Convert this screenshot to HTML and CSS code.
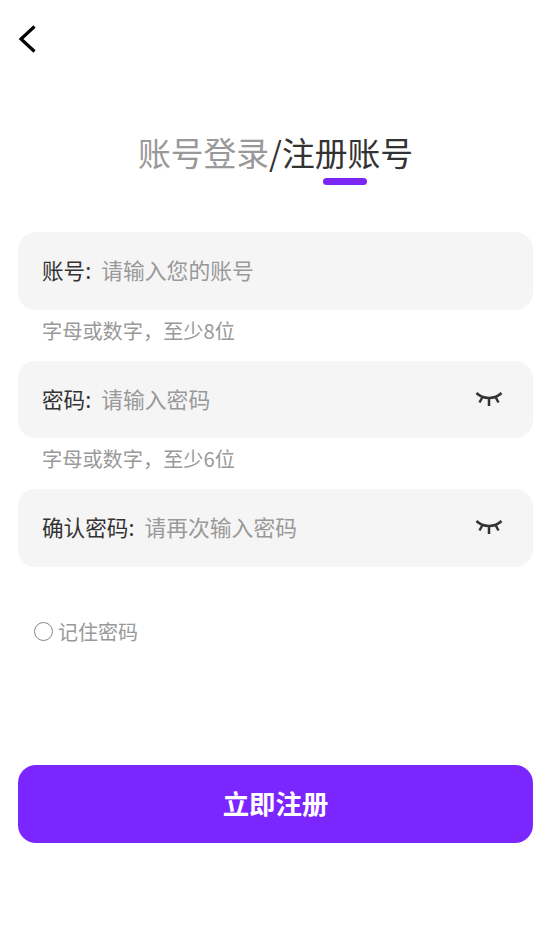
FILE: index.html
```html
<!DOCTYPE html>
<html lang="zh-CN">
<head>
    <meta charset="UTF-8">
    <meta name="viewport" content="width=device-width, initial-scale=1.0">
    <title>注册账号</title>
    <link rel="stylesheet" href="styles.css">
</head>
<body>
    <div class="container">
        <div class="nav-bar">
            <svg class="back-icon" width="20" height="30" viewBox="0 0 20 30">
                <path d="M16.5 2.5 L3 15 L16.5 27.5" fill="none" stroke="#000" stroke-width="3.2"/>
            </svg>
        </div>

        <h2 class="title"><span class="title-off">账号登录</span>/<span class="title-on">注册账号</span></h2>

        <form class="reg-form">
            <div class="form-group">
                <label>账号:</label>
                <span class="placeholder">请输入您的账号</span>
            </div>
            <div class="hint">字母或数字，至少8位</div>

            <div class="form-group">
                <label>密码:</label>
                <span class="placeholder">请输入密码</span>
                <svg class="eye-icon" width="28" height="18" viewBox="0 0 28 18">
                    <path d="M1.5 3 C8 9.5 20 9.5 26.5 3 M14 8 V16 M7.5 7 L4.5 12.5 M20.5 7 L23.5 12.5" fill="none" stroke="#333" stroke-width="2.5"/>
                </svg>
            </div>
            <div class="hint">字母或数字，至少6位</div>

            <div class="form-group">
                <label>确认密码:</label>
                <span class="placeholder">请再次输入密码</span>
                <svg class="eye-icon" width="28" height="18" viewBox="0 0 28 18">
                    <path d="M1.5 3 C8 9.5 20 9.5 26.5 3 M14 8 V16 M7.5 7 L4.5 12.5 M20.5 7 L23.5 12.5" fill="none" stroke="#333" stroke-width="2.5"/>
                </svg>
            </div>

            <div class="remember">
                <span class="radio"></span>
                <span>记住密码</span>
            </div>

            <button type="button" class="save-btn">立即注册</button>
        </form>
    </div>
</body>
</html>
```

FILE: styles.css
```css
body {
    font-family: "Noto Sans CJK SC", "Noto Sans", sans-serif;
    background-color: #ffffff;
    margin: 0;
    padding: 0;
}

.container {
    height: 948px;
    padding: 0 19px 0 18px;
    overflow: hidden;
}

.nav-bar {
    height: 78px;
    display: flex;
    align-items: center;
}

.back-icon {
    display: block;
}

.title {
    margin: 50px 0 0;
    height: 48px;
    font-size: 32.8px;
    line-height: 48px;
    font-weight: 400;
    text-align: center;
    color: #333;
}

.title-off {
    color: #999;
}

.title-on {
    position: relative;
}

.title-on::after {
    content: "";
    position: absolute;
    left: 41px;
    bottom: -10px;
    width: 44px;
    height: 7px;
    border-radius: 4px;
    background-color: #7b26f5;
}

.reg-form {
    margin-top: 56px;
}

.form-group {
    box-sizing: border-box;
    height: 77.5px;
    padding: 0 30px 2px 24px;
    display: flex;
    align-items: center;
    background-color: #f5f5f5;
    border-radius: 18px;
    font-size: 21.6px;
}

.form-group label {
    color: #333;
    margin-right: 10px;
}

.placeholder {
    color: #999;
    font-size: 21.8px;
}

.eye-icon {
    margin-left: auto;
    margin-top: 1px;
}

.hint {
    height: 51px;
    padding-left: 24px;
    font-size: 20.2px;
    line-height: 42px;
    color: #999;
}

.remember {
    margin-top: 46px;
    padding-left: 16px;
    height: 38px;
    display: flex;
    align-items: center;
    gap: 5px;
    font-size: 20px;
    color: #999;
}

.radio {
    width: 17px;
    height: 17px;
    border: 1.8px solid #888;
    border-radius: 50%;
}

.save-btn {
    display: block;
    width: 100%;
    height: 77.5px;
    margin-top: 114.5px;
    padding: 0 0 3px;
    border: none;
    border-radius: 18px;
    background-color: #7b26ff;
    color: #ffffff;
    font-family: inherit;
    font-size: 26.4px;
    font-weight: 700;
}
```
